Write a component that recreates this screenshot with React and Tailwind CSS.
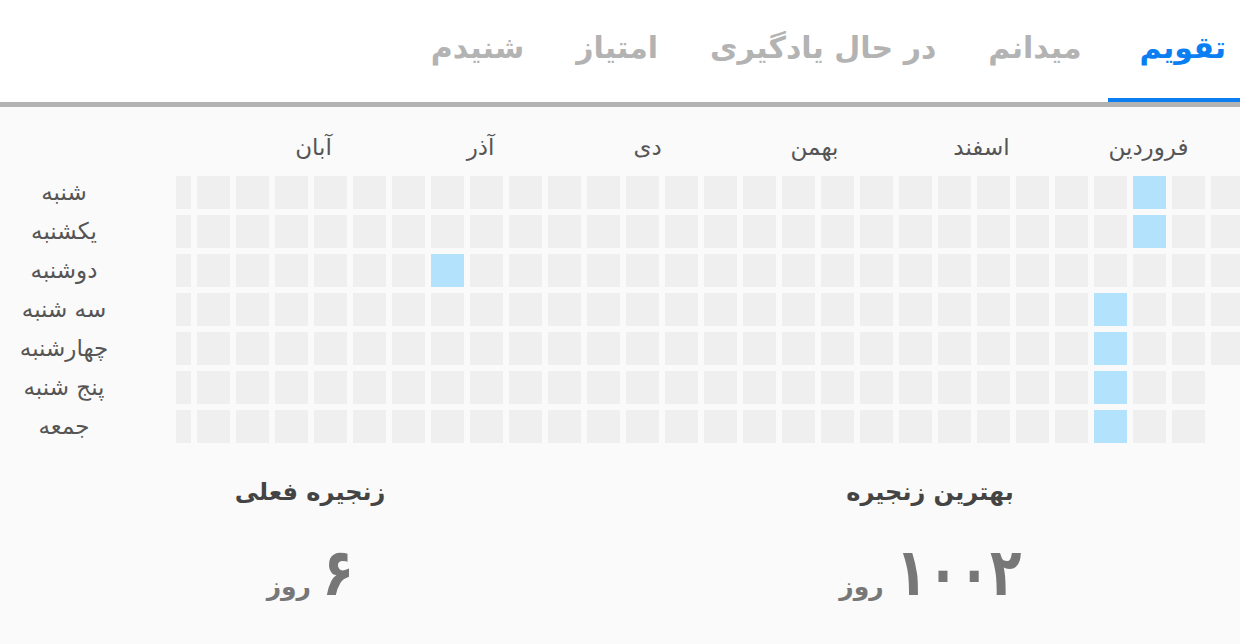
import React from 'react';

const TABS = ['تقویم', 'میدانم', 'در حال یادگیری', 'امتیاز', 'شنیدم'];
const MONTHS = ['فروردین', 'اسفند', 'بهمن', 'دی', 'آذر', 'آبان'];
const DAYS = ['شنبه', 'یکشنبه', 'دوشنبه', 'سه شنبه', 'چهارشنبه', 'پنج شنبه', 'جمعه'];

// columns counted from the right edge, rows from the top (شنبه = 0)
const ACTIVE = { 2: [0, 1], 3: [3, 4, 5, 6], 20: [2] };
const COLS = 28;

function Cell({ on, hidden }) {
  if (hidden) return <div className="w-[33px] h-[33px] flex-none" />;
  return <div className={`w-[33px] h-[33px] flex-none ${on ? 'bg-[#b3e3fc]' : 'bg-[#efefef]'}`} />;
}

function Stat({ title, value, squeeze }) {
  return (
    <div className="flex flex-col items-center">
      <div className="text-[24px] leading-[32px] font-bold text-[#444]">{title}</div>
      <div className="flex items-baseline gap-[12px] mt-[26px] text-[#777] font-bold">
        <span className={`inline-block text-[66px] leading-[78px] scale-x-[0.78] ${squeeze}`}>{value}</span>
        <span className="text-[25px]">روز</span>
      </div>
    </div>
  );
}

export default function App() {
  return (
    <div
      dir="rtl"
      className="w-[1240px] h-[644px] bg-[#fafafa] overflow-hidden"
      style={{ fontFamily: '"DejaVu Sans", sans-serif' }}
    >
      <div className="h-[107px] bg-white border-b-[5px] border-[#b3b3b3] flex items-stretch">
        {TABS.map((t, i) => (
          <div
            key={t}
            className={`h-[102px] flex items-center pb-[8px] text-[30px] font-bold whitespace-nowrap ${i === 0 ? 'text-[#0b7ff2] border-b-4 border-[#0b7ff2] pt-[4px] pr-[14px] pl-[32px]' : 'text-[#b3b3b3] px-[26px]'}`}
          >
            {t}
          </div>
        ))}
      </div>

      <div className="flex pt-[25px]">
        <div className="w-[1064px] flex-none overflow-hidden">
          <div className="flex pr-[8px] h-[30px] items-center">
            {MONTHS.map((m) => (
              <div key={m} className="w-[167px] flex-none text-center text-[23px] text-[#555] whitespace-nowrap">{m}</div>
            ))}
          </div>
          <div className="flex gap-[6px] mt-[14px] mr-[-4px]">
            {Array.from({ length: COLS }, (_, c) => (
              <div key={c} className="flex flex-col gap-[6px] flex-none">
                {DAYS.map((d, r) => (
                  <Cell key={d} on={(ACTIVE[c] || []).includes(r)} hidden={c === 0 && r > 4} />
                ))}
              </div>
            ))}
          </div>
        </div>
        <div className="w-[128px] flex-none mr-[48px] flex flex-col gap-[6px] mt-[44px]">
          {DAYS.map((d) => (
            <div key={d} className="h-[33px] flex items-center justify-center text-[23px] text-[#555] whitespace-nowrap">{d}</div>
          ))}
        </div>
      </div>

      <div className="grid grid-cols-2 mt-[33px]">
        <Stat title="بهترین زنجیره" value="۱۰۰۲" squeeze="-mx-[18px]" />
        <Stat title="زنجیره فعلی" value="۶" squeeze="-mx-[5px]" />
      </div>
    </div>
  );
}
